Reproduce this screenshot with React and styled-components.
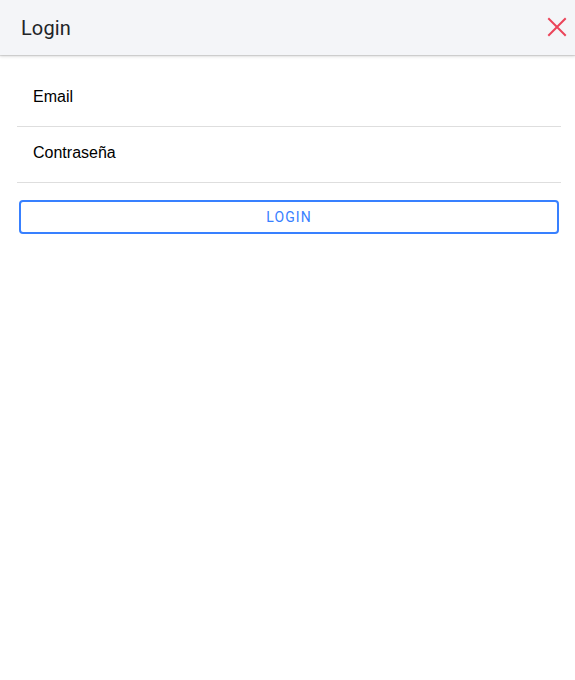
import styled, { createGlobalStyle } from "styled-components"

const GlobalStyle = createGlobalStyle`
    html, body {
        margin: 0;
        padding: 0;
        background: #ffffff;
        font-family: Roboto, "Liberation Sans", Arial, sans-serif;
    }
`

const Page = styled.div`
    width: 575px;
    min-height: 680px;
    background: #ffffff;
`

const Header = styled.header`
    height: 55px;
    display: flex;
    align-items: center;
    justify-content: space-between;
    padding: 0 0 0 21px;
    background: #f4f5f8;
    box-shadow: 0 1px 1px rgba(0, 0, 0, 0.12), 0 2px 3px rgba(0, 0, 0, 0.1);
    position: relative;
    z-index: 1;
`

const Title = styled.h1`
    margin: 0;
    font-size: 20px;
    font-weight: 400;
    color: #222428;
    letter-spacing: 0.1px;
`

const CloseButton = styled.button`
    width: 36px;
    height: 36px;
    display: flex;
    align-items: center;
    justify-content: center;
    border: none;
    background: transparent;
    padding: 0 0 2px 0;
    cursor: pointer;
`

const Content = styled.main`
    padding: 16px 14px 0 17px;
`

const List = styled.div`
    display: flex;
    flex-direction: column;
`

const Item = styled.label`
    height: 55px;
    box-sizing: border-box;
    height: 56px;
    display: flex;
    align-items: center;
    padding: 0 0 3px 16px;
    border-bottom: 1px solid #dedede;
    font-family: "Liberation Sans", Arial, sans-serif;
    font-size: 16px;
    color: #000000;
`

const LoginButton = styled.button`
    display: block;
    width: calc(100% - 4px);
    height: 34px;
    margin: 17px 2px 0 2px;
    border: 2px solid #3880ff;
    border-radius: 4px;
    background: transparent;
    color: #3880ff;
    font-family: Roboto, "Liberation Sans", Arial, sans-serif;
    font-size: 14px;
    font-weight: 400;
    letter-spacing: 1.1px;
    text-transform: uppercase;
    cursor: pointer;
`

function CloseIcon() {
    return (
        <svg width="20" height="20" viewBox="0 0 20 20">
            <path d="M2 2 L18 18 M18 2 L2 18" stroke="#eb445a" strokeWidth="2" strokeLinecap="square" fill="none" />
        </svg>
    )
}

export default function App() {
    return (
        <Page>
            <GlobalStyle />
            <Header>
                <Title>Login</Title>
                <CloseButton aria-label="close">
                    <CloseIcon />
                </CloseButton>
            </Header>
            <Content>
                <List>
                    <Item>Email</Item>
                    <Item>Contraseña</Item>
                </List>
                <LoginButton>Login</LoginButton>
            </Content>
        </Page>
    )
}
